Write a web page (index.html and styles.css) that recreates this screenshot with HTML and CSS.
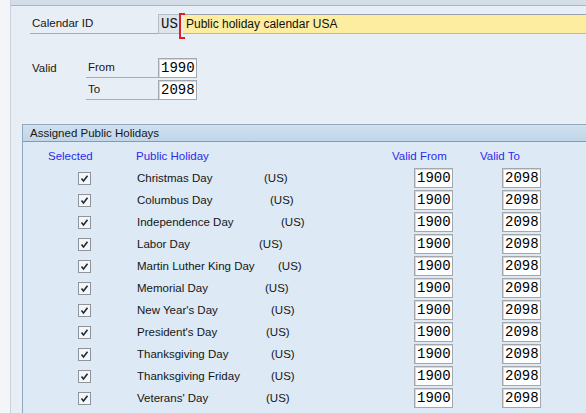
FILE: index.html
```html
<!DOCTYPE html>
<html>
<head>
<meta charset="utf-8">
<link rel="stylesheet" href="styles.css">
</head>
<body>
<div class="screen">
  <div class="strip"></div>
  <div class="main">
    <div class="topband"></div>
    <div class="calrow">
      <div class="lbl cal-lbl">Calendar ID</div>
      <div class="idfield">US</div>
      <div class="descfield">Public holiday calendar USA</div>
    </div>
    <div class="valid">
      <div class="valid-lbl">Valid</div>
      <div class="valid-rows">
        <div class="vrow"><div class="lbl sub-lbl">From</div><div class="inp">1990</div></div>
        <div class="vrow"><div class="lbl sub-lbl">To</div><div class="inp">2098</div></div>
      </div>
    </div>
    <div class="group">
      <div class="group-head">Assigned Public Holidays</div>
      <div class="group-body">
        <div class="grid">
          <div class="hd hd-sel">Selected</div>
          <div class="hd">Public Holiday</div>
          <div class="hd">Valid From</div>
          <div class="hd">Valid To</div>

          <div class="cb-cell"><span class="cb"><svg viewBox="0 0 13 13" width="13" height="13"><path d="M3.5 6.5 L5.5 9 L9.5 3.8" fill="none" stroke="#1e2a3a" stroke-width="1.6"/></svg></span></div>
          <div class="hname"><span>Christmas Day</span><span style="padding-left:127px">(US)</span></div>
          <div class="dcell"><div class="inp">1900</div></div>
          <div class="dcell"><div class="inp">2098</div></div>

          <div class="cb-cell"><span class="cb"><svg viewBox="0 0 13 13" width="13" height="13"><path d="M3.5 6.5 L5.5 9 L9.5 3.8" fill="none" stroke="#1e2a3a" stroke-width="1.6"/></svg></span></div>
          <div class="hname"><span>Columbus Day</span><span style="padding-left:133px">(US)</span></div>
          <div class="dcell"><div class="inp">1900</div></div>
          <div class="dcell"><div class="inp">2098</div></div>

          <div class="cb-cell"><span class="cb"><svg viewBox="0 0 13 13" width="13" height="13"><path d="M3.5 6.5 L5.5 9 L9.5 3.8" fill="none" stroke="#1e2a3a" stroke-width="1.6"/></svg></span></div>
          <div class="hname"><span>Independence Day</span><span style="padding-left:144px">(US)</span></div>
          <div class="dcell"><div class="inp">1900</div></div>
          <div class="dcell"><div class="inp">2098</div></div>

          <div class="cb-cell"><span class="cb"><svg viewBox="0 0 13 13" width="13" height="13"><path d="M3.5 6.5 L5.5 9 L9.5 3.8" fill="none" stroke="#1e2a3a" stroke-width="1.6"/></svg></span></div>
          <div class="hname"><span>Labor Day</span><span style="padding-left:122px">(US)</span></div>
          <div class="dcell"><div class="inp">1900</div></div>
          <div class="dcell"><div class="inp">2098</div></div>

          <div class="cb-cell"><span class="cb"><svg viewBox="0 0 13 13" width="13" height="13"><path d="M3.5 6.5 L5.5 9 L9.5 3.8" fill="none" stroke="#1e2a3a" stroke-width="1.6"/></svg></span></div>
          <div class="hname"><span>Martin Luther King Day</span><span style="padding-left:141px">(US)</span></div>
          <div class="dcell"><div class="inp">1900</div></div>
          <div class="dcell"><div class="inp">2098</div></div>

          <div class="cb-cell"><span class="cb"><svg viewBox="0 0 13 13" width="13" height="13"><path d="M3.5 6.5 L5.5 9 L9.5 3.8" fill="none" stroke="#1e2a3a" stroke-width="1.6"/></svg></span></div>
          <div class="hname"><span>Memorial Day</span><span style="padding-left:128px">(US)</span></div>
          <div class="dcell"><div class="inp">1900</div></div>
          <div class="dcell"><div class="inp">2098</div></div>

          <div class="cb-cell"><span class="cb"><svg viewBox="0 0 13 13" width="13" height="13"><path d="M3.5 6.5 L5.5 9 L9.5 3.8" fill="none" stroke="#1e2a3a" stroke-width="1.6"/></svg></span></div>
          <div class="hname"><span>New Year's Day</span><span style="padding-left:134px">(US)</span></div>
          <div class="dcell"><div class="inp">1900</div></div>
          <div class="dcell"><div class="inp">2098</div></div>

          <div class="cb-cell"><span class="cb"><svg viewBox="0 0 13 13" width="13" height="13"><path d="M3.5 6.5 L5.5 9 L9.5 3.8" fill="none" stroke="#1e2a3a" stroke-width="1.6"/></svg></span></div>
          <div class="hname"><span>President's Day</span><span style="padding-left:129px">(US)</span></div>
          <div class="dcell"><div class="inp">1900</div></div>
          <div class="dcell"><div class="inp">2098</div></div>

          <div class="cb-cell"><span class="cb"><svg viewBox="0 0 13 13" width="13" height="13"><path d="M3.5 6.5 L5.5 9 L9.5 3.8" fill="none" stroke="#1e2a3a" stroke-width="1.6"/></svg></span></div>
          <div class="hname"><span>Thanksgiving Day</span><span style="padding-left:134px">(US)</span></div>
          <div class="dcell"><div class="inp">1900</div></div>
          <div class="dcell"><div class="inp">2098</div></div>

          <div class="cb-cell"><span class="cb"><svg viewBox="0 0 13 13" width="13" height="13"><path d="M3.5 6.5 L5.5 9 L9.5 3.8" fill="none" stroke="#1e2a3a" stroke-width="1.6"/></svg></span></div>
          <div class="hname"><span>Thanksgiving Friday</span><span style="padding-left:134px">(US)</span></div>
          <div class="dcell"><div class="inp">1900</div></div>
          <div class="dcell"><div class="inp">2098</div></div>

          <div class="cb-cell"><span class="cb"><svg viewBox="0 0 13 13" width="13" height="13"><path d="M3.5 6.5 L5.5 9 L9.5 3.8" fill="none" stroke="#1e2a3a" stroke-width="1.6"/></svg></span></div>
          <div class="hname"><span>Veterans' Day</span><span style="padding-left:129px">(US)</span></div>
          <div class="dcell"><div class="inp">1900</div></div>
          <div class="dcell"><div class="inp">2098</div></div>
        </div>
      </div>
    </div>
  </div>
</div>
</body>
</html>
```

FILE: styles.css
```css
* { box-sizing: border-box; }
html, body {
  margin: 0;
  padding: 0;
  width: 586px;
  height: 413px;
  overflow: hidden;
  background: #e8eef5;
}
body {
  font-family: "Liberation Sans", Arial, sans-serif;
  font-size: 11.5px;
  color: #161616;
}
.screen {
  display: flex;
  height: 413px;
}
.strip {
  width: 11px;
  flex: none;
  background: #f3f5f8;
  border-right: 1px solid #c9d2dc;
}
.main {
  flex: 1;
  min-width: 0;
  display: flex;
  flex-direction: column;
}
.topband {
  height: 6px;
  background: #d3dee9;
  border-bottom: 1px solid #a8b6c6;
  flex: none;
}
.calrow {
  display: flex;
  height: 20px;
  margin-top: 8px;
  margin-left: 19px;
}
.lbl {
  border-bottom: 1px solid #a3adb8;
  padding-left: 2px;
  line-height: 19px;
}
.cal-lbl { width: 128px; }
.idfield {
  width: 22px;
  background: #dde4ec;
  border: 1px solid #b3bdc8;
  border-right: none;
  font-family: "Liberation Mono", "DejaVu Sans Mono", monospace;
  font-size: 14px;
  line-height: 18px;
  padding-left: 2px;
  color: #111;
}
.descfield {
  flex: 1;
  position: relative;
  margin-left: 3px;
  background: #fdeda0;
  border-top: 1px solid #9aa3ad;
  border-bottom: 1px solid #b4b9be;
  line-height: 18px;
  padding-left: 3px;
  font-size: 12px;
  color: #111;
}
.descfield::before {
  content: "";
  position: absolute;
  left: -4px;
  top: -2px;
  width: 4px;
  height: 22px;
  border: 2px solid #e02020;
  border-right: none;
}
.valid {
  display: flex;
  margin-top: 24px;
  margin-left: 19px;
}
.valid-lbl {
  width: 56px;
  padding-left: 2px;
  line-height: 20px;
}
.valid-rows {
  display: flex;
  flex-direction: column;
  gap: 2px;
}
.vrow {
  display: flex;
  height: 20px;
}
.sub-lbl { width: 72px; }
.inp {
  width: 39px;
  height: 20px;
  background: #fff;
  border: 1px solid #a4a8ad;
  box-shadow: inset 1px 1px 0 #d6d9dc;
  font-family: "Liberation Mono", monospace;
  font-size: 14px;
  line-height: 18px;
  padding-left: 2px;
  color: #000;
}
.group {
  margin-top: 24px;
  margin-left: 11px;
  margin-right: -10px;
  flex: 1;
  display: flex;
  flex-direction: column;
  border-left: 1px solid #8fa7c0;
}
.group-head {
  height: 18px;
  background: linear-gradient(#d0e1ef, #c0d6ea);
  border-top: 1px solid #93a8be;
  border-bottom: 1px solid #7e9bbd;
  padding-left: 7px;
  line-height: 16px;
  font-size: 11.5px;
  color: #161616;
}
.group-body {
  flex: 1;
  background: #dde9f4;
}
.grid {
  display: grid;
  grid-template-columns: 113px 256px 88px 1fr;
  grid-auto-rows: 22px;
  grid-template-rows: 25px;
}
.hd {
  color: #2b2bef;
  padding-top: 7px;
  line-height: 15px;
}
.hd-sel { padding-left: 25px; }
.cb-cell {
  padding-left: 55px;
  display: flex;
  align-items: center;
}
.cb {
  width: 13px;
  height: 13px;
  display: block;
  background: #f4f6f8;
  border: 1px solid #8e949a;
}
.cb svg {
  display: block;
  margin: -1px;
}
.hname {
  display: grid;
  align-items: center;
  padding-left: 1px;
}
.hname > span {
  grid-area: 1 / 1;
}
.dcell {
  padding-left: 22px;
  display: flex;
  align-items: center;
}
```
